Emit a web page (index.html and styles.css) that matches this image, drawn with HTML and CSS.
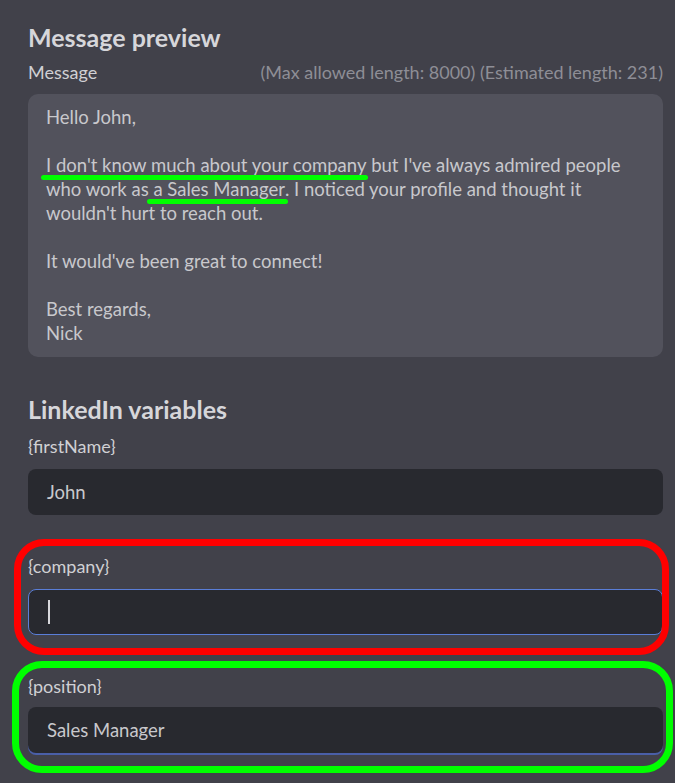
FILE: index.html
```html
<!DOCTYPE html>
<html>
<head>
<meta charset="utf-8">
<link rel="stylesheet" href="styles.css">
</head>
<body>
<div class="page">
  <h2 class="heading">Message preview</h2>
  <div class="label-row">
    <span class="label">Message</span>
    <span class="meta">(Max allowed length: 8000) (Estimated length: 231)</span>
  </div>
  <div class="preview">
    <p>Hello John,</p>
    <p><span class="mark mark-company">I don't know much about your company</span> but I've always admired people who work as <span class="mark mark-position">a Sales Manager</span>. I noticed your profile and thought it wouldn't hurt to reach out.</p>
    <p>It would've been great to connect!</p>
    <p>Best regards,<br>Nick</p>
  </div>

  <h2 class="heading heading-vars">LinkedIn variables</h2>

  <div class="field field-first">
    <div class="field-label">{firstName}</div>
    <div class="input">John</div>
  </div>

  <div class="field field-company">
    <div class="field-label">{company}</div>
    <div class="input input-focus"><span class="caret"></span></div>
    <div class="ring ring-red"></div>
  </div>

  <div class="field field-position">
    <div class="field-label">{position}</div>
    <div class="input input-line">Sales Manager</div>
    <div class="ring ring-green"></div>
  </div>
</div>
</body>
</html>
```

FILE: styles.css
```css
html, body {
  margin: 0;
  padding: 0;
  background: #41414a;
}
body {
  font-family: "Lato", "Noto Sans", sans-serif;
  color: #d2d2d6;
  height: 783px;
  overflow: hidden;
}
.page {
  padding: 22px 12px 0 28px;
}
.heading {
  margin: 0;
  font-size: 25px;
  font-weight: 700;
  color: #d6d6da;
  line-height: 30px;
}
.label-row {
  display: flex;
  justify-content: space-between;
  align-items: baseline;
  margin-top: 8px;
  line-height: 24px;
}
.label {
  font-size: 18px;
  color: #d0d0d4;
}
.meta {
  font-size: 18px;
  color: #8e8e96;
}
.preview {
  margin-top: 10px;
  background: #52525c;
  border-radius: 10px;
  padding: 11px 18px 12px 18px;
  font-size: 18.5px;
  line-height: 24px;
  color: #c8c8cc;
}
.preview p {
  margin: 0 0 24px 0;
}
.preview p:last-child {
  margin-bottom: 0;
}
.mark {
  position: relative;
}
.mark::after {
  content: "";
  position: absolute;
  height: 5px;
  background: #00ff00;
  border-radius: 3px;
}
.mark-company::after {
  left: -5px;
  right: -2px;
  bottom: -4px;
}
.mark-position::after {
  left: -6px;
  right: -3px;
  bottom: -4px;
}
.heading-vars {
  margin-top: 37px;
}
.field {
  position: relative;
}
.field-first {
  margin-top: 11px;
}
.field-label {
  font-size: 18px;
  line-height: 22px;
  color: #d0d0d4;
}
.input {
  margin-top: 12px;
  height: 46px;
  box-sizing: border-box;
  background: #28292f;
  border-radius: 8px;
  padding: 0 19px;
  display: flex;
  align-items: center;
  font-size: 18.5px;
  color: #c8c8cc;
}
.field-company {
  margin-top: 40px;
}
.input-focus {
  border: 1.5px solid #5a7ed8;
  margin-top: 12px;
}
.caret {
  display: inline-block;
  width: 1.5px;
  height: 24px;
  background: #d8d8dc;
}
.field-position {
  margin-top: 40px;
}
.input-line {
  margin-top: 10px;
  box-shadow: 0 2px 0 0 #4a5fa8;
}
.ring {
  position: absolute;
  border-radius: 30px;
  pointer-events: none;
}
.ring-red {
  left: -14px;
  right: -6px;
  top: -16px;
  bottom: -20px;
  border: 7px solid #ff0000;
}
.ring-green {
  left: -16px;
  right: -10px;
  top: -14px;
  bottom: -20px;
  border: 7px solid #00ff00;
}
```
